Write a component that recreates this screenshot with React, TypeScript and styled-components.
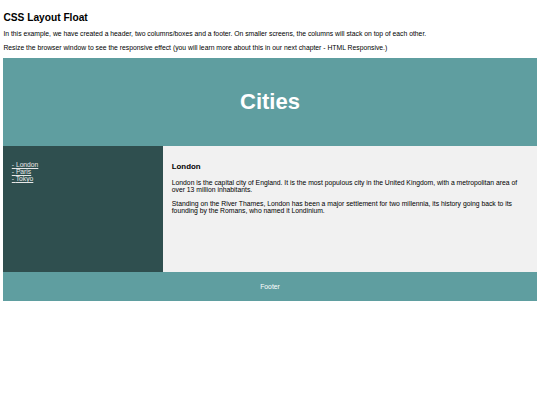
import React from "react";
import styled, { createGlobalStyle } from "styled-components";

const GlobalStyle = createGlobalStyle`
  * {
    box-sizing: border-box;
  }

  body {
    margin: 3.4px;
    font-family: "Liberation Sans", Arial, Helvetica, sans-serif;
    font-size: 6.8px;
    color: #000;
    background: #fff;
  }
`;

const PageTitle = styled.h2`
  font-size: 10.2px;
  font-weight: bold;
  margin: 8.5px 0 7.3px;
`;

const Intro = styled.p`
  margin: 7px 0;
`;

const Header = styled.header`
  background-color: #5f9ea0;
  padding: 12.6px;
  text-align: center;
  font-size: 14.7px;
  color: #fff;

  h2 {
    font-size: 22px;
    margin: 18.3px 0;
  }
`;

const Section = styled.section`
  display: flex;
`;

const Nav = styled.nav`
  width: 30%;
  height: 126px;
  background: #2f4f4f;
  padding: 8.4px;
`;

const NavList = styled.ul`
  list-style-type: none;
  padding: 0;
  margin: 6.72px 0;
  font-size: 6.72px;

  a {
    color: #e8e8e8;
  }
`;

const Article = styled.article`
  width: 70%;
  height: 126px;
  padding: 8.4px;
  background-color: #f1f1f1;

  h3 {
    font-size: 7.86px;
    margin: 7.86px 0;
  }

  p {
    margin: 6.72px 0;
  }
`;

const Footer = styled.footer`
  background-color: #5f9ea0;
  padding: 4.2px;
  text-align: center;
  color: #fff;

  p {
    margin: 6.72px 0;
  }
`;

const cities = ["London", "Paris", "Tokyo"];

export default function App() {
  return (
    <>
      <GlobalStyle />
      <PageTitle>CSS Layout Float</PageTitle>
      <Intro>
        In this example, we have created a header, two columns/boxes and a
        footer. On smaller screens, the columns will stack on top of each
        other.
      </Intro>
      <Intro>
        Resize the browser window to see the responsive effect (you will learn
        more about this in our next chapter - HTML Responsive.)
      </Intro>

      <Header>
        <h2>Cities</h2>
      </Header>

      <Section>
        <Nav>
          <NavList>
            {cities.map((city) => (
              <li key={city}>
                <a href="#">- {city}</a>
              </li>
            ))}
          </NavList>
        </Nav>

        <Article>
          <h3>London</h3>
          <p>
            London is the capital city of England. It is the most populous
            city in the United Kingdom, with a metropolitan area of over 13
            million inhabitants.
          </p>
          <p>
            Standing on the River Thames, London has been a major settlement
            for two millennia, its history going back to its founding by the
            Romans, who named it Londinium.
          </p>
        </Article>
      </Section>

      <Footer>
        <p>Footer</p>
      </Footer>
    </>
  );
}
